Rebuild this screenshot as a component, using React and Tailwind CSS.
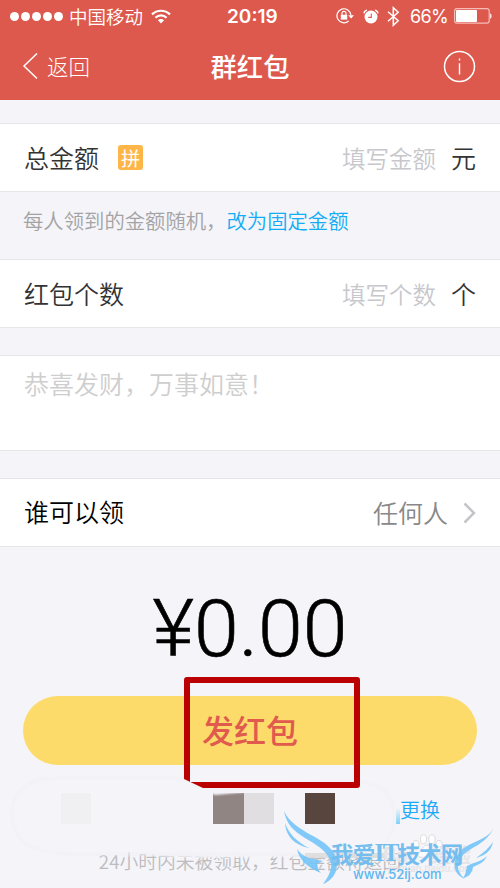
import React, { useState } from 'react';

const SignalDots = () => (
  <div className="flex items-center gap-[2px]">
    {[0, 1, 2, 3, 4].map((i) => (
      <span key={i} className="h-[9px] w-[9px] rounded-full bg-white" />
    ))}
  </div>
);

const WifiIcon = () => (
  <svg width="20" height="15" viewBox="0 0 20 15" fill="none" stroke="white">
    <path d="M1 5.4C6 .5 14 .5 19 5.4" strokeWidth="2.2" />
    <path d="M4.4 8.7C7.6 5.7 12.4 5.7 15.6 8.7" strokeWidth="2.2" />
    <path d="M6.9 11.2C8.6 9.6 11.4 9.6 13.1 11.2L10 14.4Z" fill="white" stroke="none" />
  </svg>
);

const RotationLockIcon = () => (
  <svg width="18" height="16" viewBox="0 0 18 16" fill="none" stroke="white">
    <path d="M12.6 13A7 7 0 1 1 14.9 7" strokeWidth="1.2" />
    <path d="M12.2 7.2H18L15.1 10.6Z" fill="white" stroke="none" />
    <rect x="4.8" y="6.8" width="6.4" height="4.8" fill="white" stroke="none" />
    <path d="M6 7V5.4a2 2 0 0 1 4 0V7" strokeWidth="1.1" />
  </svg>
);

const AlarmIcon = () => (
  <svg width="16" height="15" viewBox="0 0 16 15" fill="none">
    <circle cx="8" cy="8" r="6.5" fill="white" />
    <path d="M1 4.3C1.2 2.7 2.3 1.6 4 1.2M15 4.3C14.8 2.7 13.7 1.6 12 1.2" stroke="white" strokeWidth="1.3" />
    <path d="M8.3 4.4V8.4H5.2" stroke="#de594d" strokeWidth="1.1" />
  </svg>
);

const BluetoothIcon = () => (
  <svg width="13" height="21" viewBox="0 0 13 21" fill="none" stroke="white" strokeWidth="1.5">
    <path d="M1 5.8L11.2 14.8L6.3 19.2V1.8L11.2 6.2L1 15.2" />
  </svg>
);

const BatteryIcon = () => (
  <svg width="38" height="16" viewBox="0 0 38 16" fill="none">
    <rect x=".6" y=".6" width="34.6" height="14.6" rx="2.4" stroke="#f5bcb7" strokeWidth="1.2" />
    <rect x="2" y="2" width="21" height="12" rx="1" fill="white" />
    <path d="M36.2 5.2C38 6 38 10 36.2 10.8Z" fill="white" />
  </svg>
);

const StatusBar = () => (
  <div className="flex h-8 items-center pl-[10px] pr-[8px] text-white">
    <SignalDots />
    <span className="ml-[6px] pb-px text-[18.5px] font-[350] leading-8">中国移动</span>
    <div className="ml-[8px]"><WifiIcon /></div>
    <span className="ml-[56px] w-[54px] pt-[2px] font-['Inter'] text-[19px] font-semibold">20:19</span>
    <div className="ml-auto flex items-center">
      <RotationLockIcon />
      <div className="ml-[9px]"><AlarmIcon /></div>
      <div className="ml-[8px]"><BluetoothIcon /></div>
      <span className="ml-[10px] mr-[6px] w-[38px] whitespace-nowrap pt-px font-['Inter'] text-[18px] tracking-[-0.6px]">66%</span>
      <BatteryIcon />
    </div>
  </div>
);

const NavBar = () => (
  <div className="grid h-[68px] grid-cols-3 items-center pl-[22px] pr-[24px] text-white">
    <button type="button" className="flex items-center text-left">
      <svg width="16" height="28" viewBox="0 0 16 28" fill="none" stroke="white" strokeWidth="1.5">
        <path d="M15 1.5L2 14L15 26.5" />
      </svg>
      <span className="ml-[9px] text-[21.5px] font-light leading-7">返回</span>
    </button>
    <h1 className="pb-px pl-[2px] text-center text-[26.3px] font-medium leading-8">群红包</h1>
    <button type="button" className="justify-self-end">
      <svg width="33" height="33" viewBox="0 0 33 33" fill="none" stroke="white">
        <circle cx="16.5" cy="16.5" r="15" strokeWidth="1.5" />
        <path d="M16.5 13.2V24.5M16.5 8.6V10.6" strokeWidth="1.4" />
      </svg>
    </button>
  </div>
);

const FieldRow = ({ label, badge, placeholder, unit }) => {
  const [value, setValue] = useState('');

  return (
    <div className="flex h-[69px] items-center border-y border-[#e6e6ea] bg-white px-6">
      <label className="pb-[2px] text-[25px] font-[350] leading-8 text-[#333]">{label}</label>
      {badge && (
        <span className="ml-[19px] flex h-[25px] w-[25px] items-center justify-center rounded-[3px] bg-[#ffb648] pb-px text-[19px] leading-none text-white">
          {badge}
        </span>
      )}
      <input
        type="text"
        value={value}
        onChange={(e) => setValue(e.target.value)}
        placeholder={placeholder}
        className="ml-auto w-[200px] text-right text-[23.5px] font-[350] leading-8 outline-none placeholder:text-[#c7c7cc]"
      />
      <span className="ml-[15px] pb-[2px] text-[25px] font-[350] leading-8 text-[#333]">{unit}</span>
    </div>
  );
};

// Site mark with wings on both sides of the name
const WingMark = () => (
  <div className="absolute left-[283px] top-[810px] h-[74px] w-[212px]">
    <svg width="212" height="74" viewBox="0 0 212 74" fill="#74c4f8" fillOpacity=".9">
      <path d="M1 1C6 12 16 18 28 25C42 32 54 41 54 54C54 64 48 71 40 74C46 66 50 58 47 50C43 40 32 34 22 28C10 21 3 13 1 1Z" />
      <path d="M2 13C6 24 14 32 26 38C12 35 3 27 2 13Z" />
      <path d="M14 39C20 48 30 49 40 51L34 54C34 57 36 61 38 63C25 58 16 50 14 39Z" />
      <path d="M211 18C205 29 197 34 188 39C179 44 175 51 175 58C176 62 179 67 182 69C174 66 170 59 172 51C174 42 181 37 190 33C199 29 206 26 211 18Z" />
      <path d="M210 32C208 41 203 45 193 48C200 43 206 38 210 32Z" />
      <path d="M204 46C201 53 196 54 190 57C189 63 186 67 180 68C183 64 183 60 184 56C191 52 198 52 204 46Z" />
    </svg>
    <div className="absolute left-[48px] top-[29px] flex items-center whitespace-nowrap text-[22.5px] font-bold leading-[28px] tracking-[-0.8px] text-[#74bdef]">
      我爱
      <span className="w-[23px] font-['Liberation_Serif'] text-[25px] tracking-[-1.5px]">IT</span>
      技术网
    </div>
    <div className="absolute left-[70px] top-[57px] whitespace-nowrap font-['Inter'] text-[13px] font-medium leading-[14px] text-[#5eb5f0]">
      www.52ij.com
    </div>
  </div>
);

const PawMark = () => (
  <div className="absolute left-[383px] top-[832px] h-[46px] w-[92px] text-[#e5e5e8]">
    <svg className="absolute left-[29px] top-[2px]" width="32" height="24" viewBox="0 0 32 24" fill="#fdfdfe" stroke="#dcdce0" strokeWidth="1">
      <ellipse cx="4" cy="11" rx="3" ry="4.5" />
      <ellipse cx="11.5" cy="5.2" rx="3.2" ry="4.5" />
      <ellipse cx="20" cy="5.2" rx="3.2" ry="4.5" />
      <ellipse cx="27" cy="11" rx="3" ry="4.5" />
      <path d="M15.5 11C11 11 9 17 6 20C5 23 9 24 15.5 23C22 24 26 23 25 20C22 17 20 11 15.5 11Z" />
    </svg>
    <div className="absolute left-0 top-[11px] flex w-[88px] justify-between text-[20px] font-bold leading-[24px]">
      <span className="font-['Inter']">Bai</span>
      <span>经验</span>
    </div>
    <div className="absolute left-[5px] top-[31px] font-['Inter'] text-[9.5px] font-semibold leading-[12px]">
      jingyan.baidu.com
    </div>
  </div>
);

const App = () => {
  const [message, setMessage] = useState('');

  return (
    <div className="relative h-[888px] w-[500px] overflow-hidden bg-[#f4f4f9] font-['Noto_Sans_CJK_SC',sans-serif]">
      <header className="bg-[#de594d]">
        <StatusBar />
        <NavBar />
      </header>

      <main className="flex flex-col pt-[23px]">
        <FieldRow label="总金额" badge="拼" placeholder="填写金额" unit="元" />
        <p className="flex h-[67px] items-center pb-[11px] pl-[23px] text-[20.35px] font-[350] text-[#a3a3a5]">
          每人领到的金额随机，
          <button type="button" className="text-[#12adf5]">改为固定金额</button>
        </p>
        <FieldRow label="红包个数" placeholder="填写个数" unit="个" />

        <textarea
          value={message}
          onChange={(e) => setMessage(e.target.value)}
          placeholder="恭喜发财，万事如意！"
          className="mt-[27px] h-[96px] w-full resize-none border-y border-[#e6e6ea] bg-white px-6 pt-[11px] text-[25px] font-[350] leading-8 outline-none placeholder:text-[#cecece]"
        />

        <div className="mt-[27px] flex h-[69px] items-center border-y border-[#e6e6ea] bg-white px-6">
          <span className="pb-[3px] text-[25px] font-[350] leading-8 text-black">谁可以领</span>
          <span className="ml-auto pb-px text-[25px] font-[350] leading-8 text-[#888]">任何人</span>
          <svg className="ml-[15px]" width="13" height="22" viewBox="0 0 13 22" fill="none" stroke="#c4c4c9" strokeWidth="2.5">
            <path d="M1.5 1.5L11 11L1.5 20.5" />
          </svg>
        </div>

        {/* Amount */}
        <div className="mt-[36px] scale-x-[1.02] text-center font-['Roboto'] text-[79px] font-light leading-[92px] text-black [-webkit-text-stroke:0.6px_black]">
          ¥0.00
        </div>

        <button
          type="button"
          className="mx-[23px] mt-[21px] h-[69px] rounded-full bg-[#fddb6b] pb-[4px] text-[32px] font-medium leading-[64px] text-[#e05a4e]"
        >
          发红包
        </button>

        {/* Payment method, name masked */}
        <div className="mt-[27px] flex h-[32px] items-center pl-[61px]">
          <span className="h-[31px] w-[30px] bg-[#f0f0f2]" />
          <span className="ml-[122px] h-[31px] w-[31px] bg-[#918583]" />
          <span className="h-[31px] w-[30px] bg-[#e0dee1]" />
          <span className="ml-[31px] h-[31px] w-[30px] bg-[#58453d]" />
          <span className="ml-[61px] h-[16px] w-[4px] self-end bg-linear-to-t from-[#7ccff8] to-transparent" />
          <button type="button" className="pt-[3px] text-[20px] font-[350] leading-8 text-[#1ba9f8]">更换</button>
        </div>

        <p className="mt-[21px] text-center text-[18.8px] font-[350] leading-8 text-[#bcbcbf]">
          24小时内未被领取，红包金额将退回
        </p>
      </main>

      {/* Smear left by the eraser over the name */}
      <svg className="pointer-events-none absolute left-0 top-[765px]" width="500" height="123" viewBox="0 0 500 123" fill="none">
        <defs>
          <filter id="soft" x="-20%" y="-50%" width="140%" height="200%">
            <feGaussianBlur stdDeviation="1.2" />
          </filter>
        </defs>
        <path d="M184 14L190 18L202 24L215 30L246 27L240 25L205 24L192 20Z" fill="#f4f4f9" filter="url(#soft)" />
        <path d="M182 12L200 24L180 26Z" fill="#f4f4f9" filter="url(#soft)" />
        <path d="M150 89C180 96 260 90 395 92V85H150Z" fill="#f4f4f9" filter="url(#soft)" />
        <path
          d="M12 45C14 20 35 13 60 13H170C190 14 195 22 215 26C260 26 300 16 340 15C380 16 394 26 394 50C394 75 385 88 340 89H70C30 87 12 78 12 45Z"
          stroke="#f1f1f5"
          strokeOpacity=".7"
          strokeWidth="3"
          filter="url(#soft)"
        />
        <rect x="305" y="88" width="80" height="5" fill="#d9d9da" fillOpacity=".8" />
      </svg>

      <PawMark />
      <WingMark />

      {/* Highlight box */}
      <div className="pointer-events-none absolute left-[184px] top-[677px] h-[111px] w-[176px] rounded-[3px] border-[6px] border-[#ba0000] [clip-path:polygon(0_0,100%_0,100%_100%,19px_100%,0_102px)]" />
    </div>
  );
};

export default App;
